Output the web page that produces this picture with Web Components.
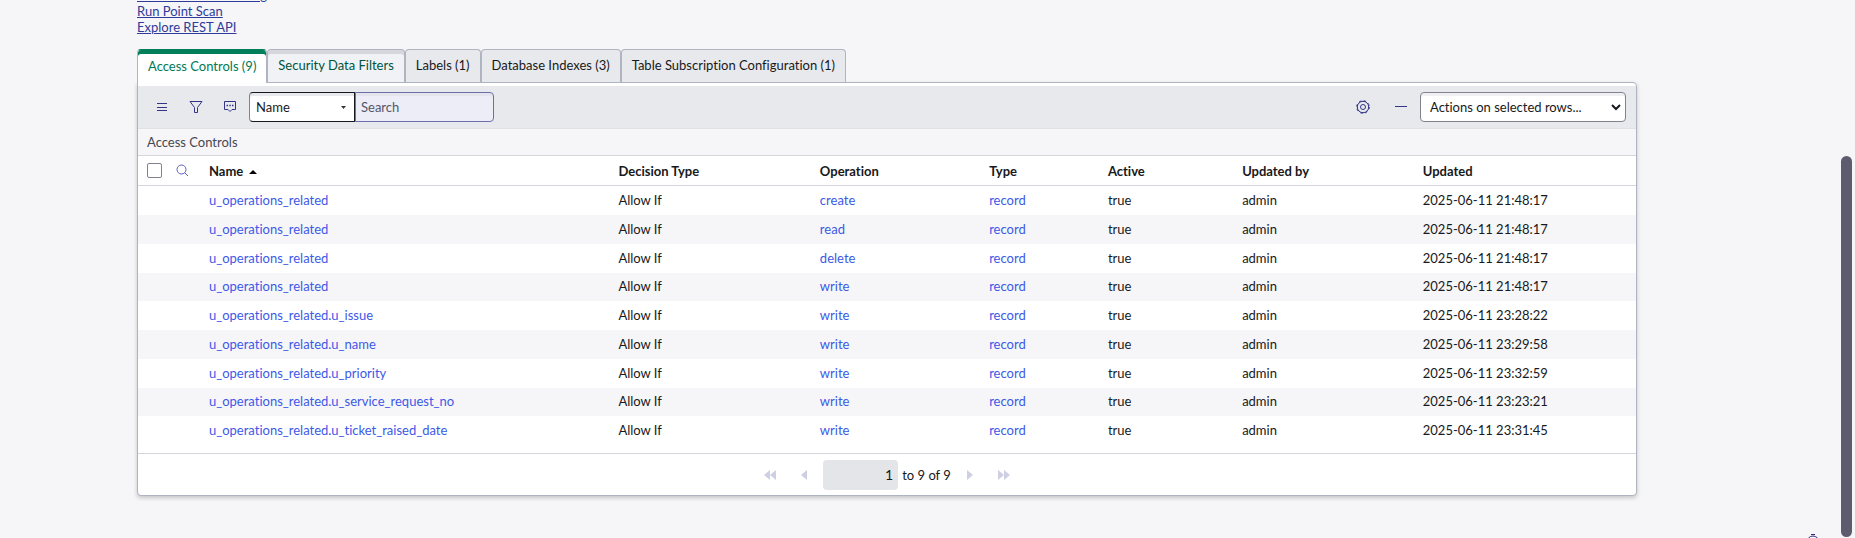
<!DOCTYPE html>
<html lang="en">
<head>
<meta charset="utf-8">
<title>Access Controls</title>
<style>
html, body { margin: 0; height: 100%; }
body { background: #f6f6f8; color: #181920; font: 13px/16px Lato, "Liberation Sans", sans-serif; font-variant-ligatures: none; overflow: hidden; }
</style>
</head>
<body>
<record-page>
  <related-links slot="links"></related-links>
  <tab-strip></tab-strip>
  <list-card></list-card>
</record-page>

<script>
const define = (name, html) => customElements.define(name, class extends HTMLElement {
  constructor() {
    super();
    this.attachShadow({ mode: "open" }).innerHTML = html;
  }
});

define("record-page", `
<style>
:host { display: grid; grid-template-columns: 1fr auto; height: 100vh; overflow: hidden; }
main { padding: 0 204px 0 137px; min-width: 0; }
.links { margin-top: -13px; padding-bottom: 14px; }
aside { display: flex; flex-direction: column; padding: 156px 3px 1px 0; box-sizing: border-box; height: 100vh; }
.thumb { flex: 1; width: 11px; border-radius: 6px; background: #5d5c6e; }
response-timer { position: absolute; right: 34px; bottom: -12px; }
</style>
<main><div class="links"><slot name="links"></slot></div><slot></slot></main>
<aside><div class="thumb"></div></aside>
<response-timer></response-timer>`);

define("response-timer", `
<style>
:host { display: block; height: 16px; }
button { border: 0; background: none; padding: 0; display: block; }
svg { display: block; }
</style>
<button aria-label="Response time"><svg width="16" height="16" viewBox="0 0 16 16" fill="none" stroke="#2e2e84"><path d="M6 .5h4"/><circle cx="8" cy="8" r="6"/><path d="M8 6v3h3"/></svg></button>`);

define("related-links", `
<style>
:host { display: block; }
ul { margin: 0; padding: 0; list-style: none; }
a { color: #2e3b9a; }
</style>
<ul><li><a href="#">Add to Service Catalog</a></li><li><a href="#">Run Point Scan</a></li><li><a href="#">Explore REST API</a></li></ul>`);

define("tab-strip", `
<style>
:host { display: block; }
div { display: flex; }
button { font: inherit; color: inherit; height: 33px; padding: 0 10px 2px; border: 1px solid #b0b3c0; border-bottom: 0; border-radius: 4px 4px 0 0; background: #e8e9ed; }
.hover { color: #00543c; background: #f1f2f5; box-shadow: inset 0 4px #d5d7dd; }
.active { color: #007a55; background: #fff; box-shadow: inset 0 4px #007f5a; border-top-color: #007f5a; height: 34px; margin-bottom: -1px; position: relative; }
</style>
<div role="tablist">
<button role="tab" class="active" aria-selected="true">Access Controls (9)</button>
<button role="tab" class="hover">Security Data Filters</button>
<button role="tab">Labels (1)</button>
<button role="tab">Database Indexes (3)</button>
<button role="tab">Table Subscription Configuration (1)</button>
</div>`);

define("list-card", `
<style>
:host { display: block; background: #fff; border: 1px solid #b0b3c0; border-radius: 0 4px 4px 4px; box-shadow: 0 2px 4px #0003; padding-top: 3px; }
p { margin: 0; padding: 5px 9px; background: #f6f6f8; color: #464853; border-top: 1px solid #e0e1e6; }
</style>
<list-toolbar></list-toolbar>
<p>Access Controls</p>
<acl-table></acl-table>
<list-pager></list-pager>`);

define("list-toolbar", `
<style>
:host { display: flex; align-items: center; height: 42px; padding: 0 10px 0 9px; background: #e8e9ed; }
button { width: 30px; height: 30px; margin-right: 4px; padding: 0; border: 0; background: none; display: grid; place-items: center; }
svg { fill: none; stroke: #34348a; }
select, input { font: inherit; color: inherit; height: 30px; box-sizing: border-box; margin: 0; }
.pick { position: relative; display: flex; }
.pick svg { position: absolute; right: 9px; top: 14px; fill: #33353f; stroke: none; }
.field { appearance: none; width: 106px; padding: 0 6px; border: 1px solid #181920; border-left-color: #80838f; border-radius: 4px 0 0 4px; background: #fff; box-shadow: inset 0 3px #e8e9ec; }
.search { width: 139px; padding: 0 5px; border: 1px solid #6d6fac; border-radius: 0 4px 4px 0; background: #ededf7; box-shadow: inset 0 3px #e3e4ec; }
.search::placeholder { color: #53556a; opacity: 1; }
.right { margin-left: auto; margin-right: 8px; }
.actions { appearance: none; width: 206px; padding: 0 9px; border: 1px solid #80838f; border-radius: 4px; background: #fff; box-shadow: inset 0 3px #f0f0f3; }
.pick .chev { right: 5px; top: 12px; fill: none; stroke: #181920; stroke-width: 2; }
</style>
<button aria-label="List menu"><svg width="12" height="10"><path d="M1 1.500h10M1 5.500h10M1 8.500h10"/></svg></button>
<button aria-label="Filter"><svg width="14" height="14"><path d="M1 1.500h12L8.500 7.500v5h-3v-5z"/></svg></button>
<button aria-label="List activity"><svg width="14" height="14"><path d="M1.500 1.500h11v8H9l-2 2-2-2H1.500z"/><path d="M3.500 5.500h1.500M6.300 5.500h1.500M9 5.500h1.500" stroke-width="1.500"/></svg></button>
<div class="pick"><select class="field" aria-label="Search field"><option>Name</option></select><svg width="5" height="3"><path d="M0 0h5L2.500 3z"/></svg></div>
<input class="search" type="search" placeholder="Search" aria-label="Search">
<button class="right" aria-label="Personalize list"><svg width="14" height="14"><circle cx="7" cy="7" r="5.700"/><circle cx="7" cy="7" r="6.300" stroke-dasharray="2.475"/><circle cx="7" cy="7" r="2.500"/></svg></button>
<button aria-label="Collapse"><svg width="12" height="2"><path d="M0 .5h12"/></svg></button>
<div class="pick"><select class="actions" aria-label="Actions"><option>Actions on selected rows...</option></select><svg class="chev" width="10" height="7"><path d="M1 1l4 4 4-4"/></svg></div>`);

const rows = [
  ["", "create", "21:48:17"], ["", "read", "21:48:17"], ["", "delete", "21:48:17"], ["", "write", "21:48:17"],
  [".u_issue", "write", "23:28:22"], [".u_name", "write", "23:29:58"], [".u_priority", "write", "23:32:59"],
  [".u_service_request_no", "write", "23:23:21"], [".u_ticket_raised_date", "write", "23:31:45"]
].map(([name, op, time]) => `<tr><td></td><td></td><td><a href="#">u_operations_related${name}</a></td><td>Allow If</td><td><a href="#">${op}</a></td><td><a href="#">record</a></td><td>true</td><td>admin</td><td>2025-06-11 ${time}</td></tr>`).join("");

define("acl-table", `
<style>
:host { display: block; border-top: 1px solid #d5d6db; padding-bottom: 8px; }
table { width: 100%; table-layout: fixed; border-collapse: separate; border-spacing: 0; }
th { height: 29px; padding: 0; text-align: left; font-weight: 700; border-bottom: 1px solid #d5d6db; }
td { height: 27px; padding: 0 0 2px; }
tbody tr:nth-child(4n) td { height: 26px; }
tbody tr:nth-child(even) { background: #f6f6f8; }
a { color: #3c59e7; text-decoration: none; }
input { appearance: none; display: block; margin: 0 0 0 9px; width: 15px; height: 15px; border: 1px solid #80838f; border-radius: 2px; background: #fff; }
button { border: 0; background: none; padding: 0; display: block; }
svg { display: block; }
.sort { display: inline-block; margin-left: 3px; vertical-align: 2px; }
</style>
<table>
<colgroup><col style="width:38px"><col style="width:33px"><col style="width:27.330%"><col style="width:13.450%"><col style="width:11.300%"><col style="width:7.930%"><col style="width:8.960%"><col style="width:12.060%"><col></colgroup>
<thead><tr><th><input type="checkbox" aria-label="Select all"></th>
<th><button aria-label="Search columns"><svg width="13" height="13" fill="none" stroke="#5b5fc0"><circle cx="5.500" cy="5.500" r="4.500"/><path d="M8.700 8.700l3.300 3.300"/></svg></button></th>
<th>Name <svg class="sort" width="8" height="4"><path d="M0 4h8L4 0z"/></svg></th><th>Decision Type</th><th>Operation</th><th>Type</th><th>Active</th><th>Updated by</th><th>Updated</th></tr></thead>
<tbody>${rows}</tbody>
</table>`);

define("list-pager", `
<style>
:host { display: flex; justify-content: center; align-items: center; height: 41px; border-top: 1px solid #d5d6db; }
button { border: 0; background: none; padding: 0; display: grid; place-items: center; height: 30px; width: 34px; }
svg { fill: #cfcfe4; }
input { font: inherit; font-size: 14px; color: inherit; width: 75px; height: 30px; box-sizing: border-box; border: 0; border-radius: 4px; background: #e4e5e9; text-align: right; padding: 0 5px; margin: 0 4px 0 2px; }
span { margin-right: 2px; }
</style>
<button aria-label="First page"><svg width="12" height="10"><path d="M6 0v10L0 5zM12 0v10L6 5z"/></svg></button>
<button aria-label="Previous page"><svg width="6" height="10"><path d="M6 0v10L0 5z"/></svg></button>
<input type="text" value="1" aria-label="Skip to row"><span>to 9 of 9</span>
<button aria-label="Next page"><svg width="6" height="10"><path d="M0 0v10l6-5z"/></svg></button>
<button aria-label="Last page"><svg width="12" height="10"><path d="M0 0v10l6-5zM6 0v10l6-5z"/></svg></button>`);
</script>
</body>
</html>
